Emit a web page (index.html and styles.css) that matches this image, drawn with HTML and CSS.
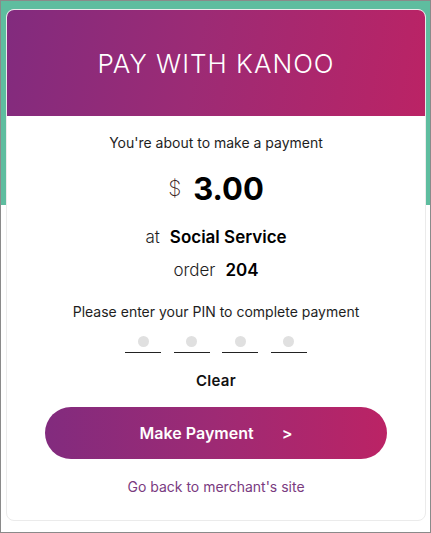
FILE: index.html
```html
<!DOCTYPE html>
<html>
<head>
<meta charset="utf-8">
<link rel="stylesheet" href="styles.css">
</head>
<body>
<div class="frame">
  <div class="card">
    <div class="card-header">PAY WITH KANOO</div>
    <div class="card-body">
      <div class="intro">You're about to make a payment</div>
      <div class="amount"><span class="currency">$</span><span class="value">3.00</span></div>
      <div class="detail"><span class="label">at</span><span class="strong">Social Service</span></div>
      <div class="detail order"><span class="label">order</span><span class="strong">204</span></div>
      <div class="prompt">Please enter your PIN to complete payment</div>
      <div class="pin">
        <div class="pin-slot"><span class="dot"></span></div>
        <div class="pin-slot"><span class="dot"></span></div>
        <div class="pin-slot"><span class="dot"></span></div>
        <div class="pin-slot"><span class="dot"></span></div>
      </div>
      <div class="clear">Clear</div>
      <button class="pay-btn"><span>Make Payment</span><span class="arrow">&gt;</span></button>
      <a class="back" href="#">Go back to merchant's site</a>
    </div>
  </div>
</div>
</body>
</html>
```

FILE: styles.css
```css
* { box-sizing: border-box; }
html, body { margin: 0; padding: 0; }
body {
  font-family: "Inter", "Noto Sans", sans-serif;
  color: #1e1e1e;
}
.frame {
  width: 431px;
  height: 533px;
  border: 1px solid #8a8a8a;
  background: linear-gradient(to bottom, #5ebd9f 0, #5ebd9f 204px, #ffffff 204px);
  padding: 8px 0 0 5px;
}
.card {
  width: 420px;
  height: 512px;
  border: 1px solid #ebebeb;
  border-radius: 8px;
  overflow: hidden;
  background: #fff;
}
.card-header {
  height: 106px;
  display: flex;
  align-items: center;
  justify-content: center;
  color: #fff;
  font-weight: 300;
  font-size: 26px;
  letter-spacing: 1px;
  background: linear-gradient(100deg, #822b7e 0%, #9c2b75 45%, #bb2365 100%);
}
.card-body {
  display: flex;
  flex-direction: column;
  align-items: center;
  padding-top: 17px;
}
.intro {
  font-size: 14px;
  line-height: 20px;
}
.amount {
  margin-top: 15px;
  height: 40px;
  display: flex;
  align-items: center;
  gap: 12px;
}
.currency {
  font-size: 21px;
  font-weight: 200;
  color: #3a2424;
}
.value {
  font-size: 31px;
  font-weight: 700;
  color: #000;
}
.detail {
  margin-top: 17px;
  line-height: 24px;
  display: flex;
  gap: 10px;
  font-size: 17px;
}
.detail.order { margin-top: 9px; }
.label { font-weight: 300; }
.strong { font-weight: 600; color: #000; }
.prompt {
  margin-top: 20px;
  font-size: 14px;
  line-height: 20px;
}
.pin {
  margin-top: 12px;
  display: flex;
  gap: 12.5px;
}
.pin-slot {
  width: 36px;
  height: 19px;
  border-bottom: 1px solid #222;
  display: flex;
  justify-content: center;
  align-items: flex-start;
  padding-top: 2px;
}
.dot {
  width: 11px;
  height: 11px;
  border-radius: 50%;
  background: #e0e0e0;
}
.clear {
  margin-top: 18px;
  font-size: 15px;
  font-weight: 600;
  letter-spacing: 0.3px;
  line-height: 20px;
  color: #111;
}
.pay-btn {
  margin-top: 16px;
  width: 342px;
  height: 52px;
  border: none;
  border-radius: 26px;
  background: linear-gradient(to right, #822b7e 0%, #9e2a74 50%, #bb2365 100%);
  color: #fff;
  font-family: inherit;
  font-size: 16px;
  font-weight: 600;
  display: flex;
  align-items: center;
  justify-content: center;
  gap: 28px;
  padding: 0;
}
.back {
  margin-top: 18px;
  font-size: 14px;
  line-height: 20px;
  color: #7a3b7f;
  text-decoration: none;
}
```
